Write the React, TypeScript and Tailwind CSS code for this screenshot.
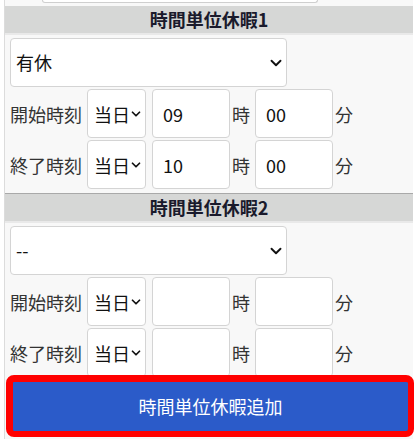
import { ChevronDown } from "lucide-react";

const font = { fontFamily: '"Noto Sans CJK JP", "Noto Sans", sans-serif' };

type Row = { label: string; hour: string; min: string };

const sections: { title: string; kind: string; rows: Row[] }[] = [
  {
    title: "時間単位休暇1",
    kind: "有休",
    rows: [
      { label: "開始時刻", hour: "09", min: "00" },
      { label: "終了時刻", hour: "10", min: "00" },
    ],
  },
  {
    title: "時間単位休暇2",
    kind: "--",
    rows: [
      { label: "開始時刻", hour: "", min: "" },
      { label: "終了時刻", hour: "", min: "" },
    ],
  },
];

function TimeRow({ row }: { row: Row }) {
  return (
    <div className="flex items-center h-[49px] text-[18px] leading-none">
      <span className="w-[77px] text-[#333]">{row.label}</span>
      <div className="w-[59px] h-[49px] flex items-center pl-[6px] bg-white border border-[#d4d4d4] rounded-[4px] text-[#111]">
        <span>当日</span>
        <ChevronDown className="w-[14px] h-[14px] -ml-[1px]" strokeWidth={3} />
      </div>
      <div className="ml-[6px] w-[78px] h-[49px] flex items-center pl-[10px] bg-white border border-[#d4d4d4] rounded-[4px] text-[#111]">
        {row.hour}
      </div>
      <span className="ml-[2px] w-[18px] text-[#333]">時</span>
      <div className="ml-[5px] w-[78px] h-[49px] flex items-center pl-[10px] bg-white border border-[#d4d4d4] rounded-[4px] text-[#111]">
        {row.min}
      </div>
      <span className="ml-[2px] text-[#333]">分</span>
    </div>
  );
}

export default function App() {
  return (
    <div className="relative w-[418px] h-[439px] overflow-hidden bg-white" style={font}>
      <div className="ml-[4px] w-[409px] min-h-[439px] border-l border-[#dcdcdc] bg-[#f8f8f8]">
        <div className="h-[6px]">
          <div className="ml-[37px] w-[276px] h-[3px] bg-white border border-t-0 border-[#cfcfcf] rounded-b-[4px]" />
        </div>
        {sections.map((s, i) => (
          <div key={s.title} className={i > 0 ? "border-t border-[#a9a9a9]" : ""}>
            <div className="h-[29px] bg-[#d6d7d6] border-b-2 border-[#e9e9e9] flex items-center justify-center text-[18px] font-bold text-[#1a1a2c]">
              {s.title}
            </div>
            <div className="px-[5px] pt-[3px] pb-[4px] flex flex-col gap-[2px]">
              <div className="w-[277px] h-[49px] flex items-center justify-between pl-[5px] pr-[1px] bg-white border border-[#d4d4d4] rounded-[4px] text-[18px] text-[#111]">
                <span>{s.kind}</span>
                <ChevronDown className="w-[18px] h-[18px]" strokeWidth={2.5} />
              </div>
              {s.rows.map((r) => (
                <TimeRow key={r.label} row={r} />
              ))}
            </div>
          </div>
        ))}
      </div>
      <button className="absolute left-[6px] top-[375px] w-[408px] h-[62px] bg-[#2b5bc9] border-[6px] border-l-[7px] border-t-[7px] border-[#ff0000] rounded-[8px] text-white text-[18px]">
        時間単位休暇追加
      </button>
    </div>
  );
}
